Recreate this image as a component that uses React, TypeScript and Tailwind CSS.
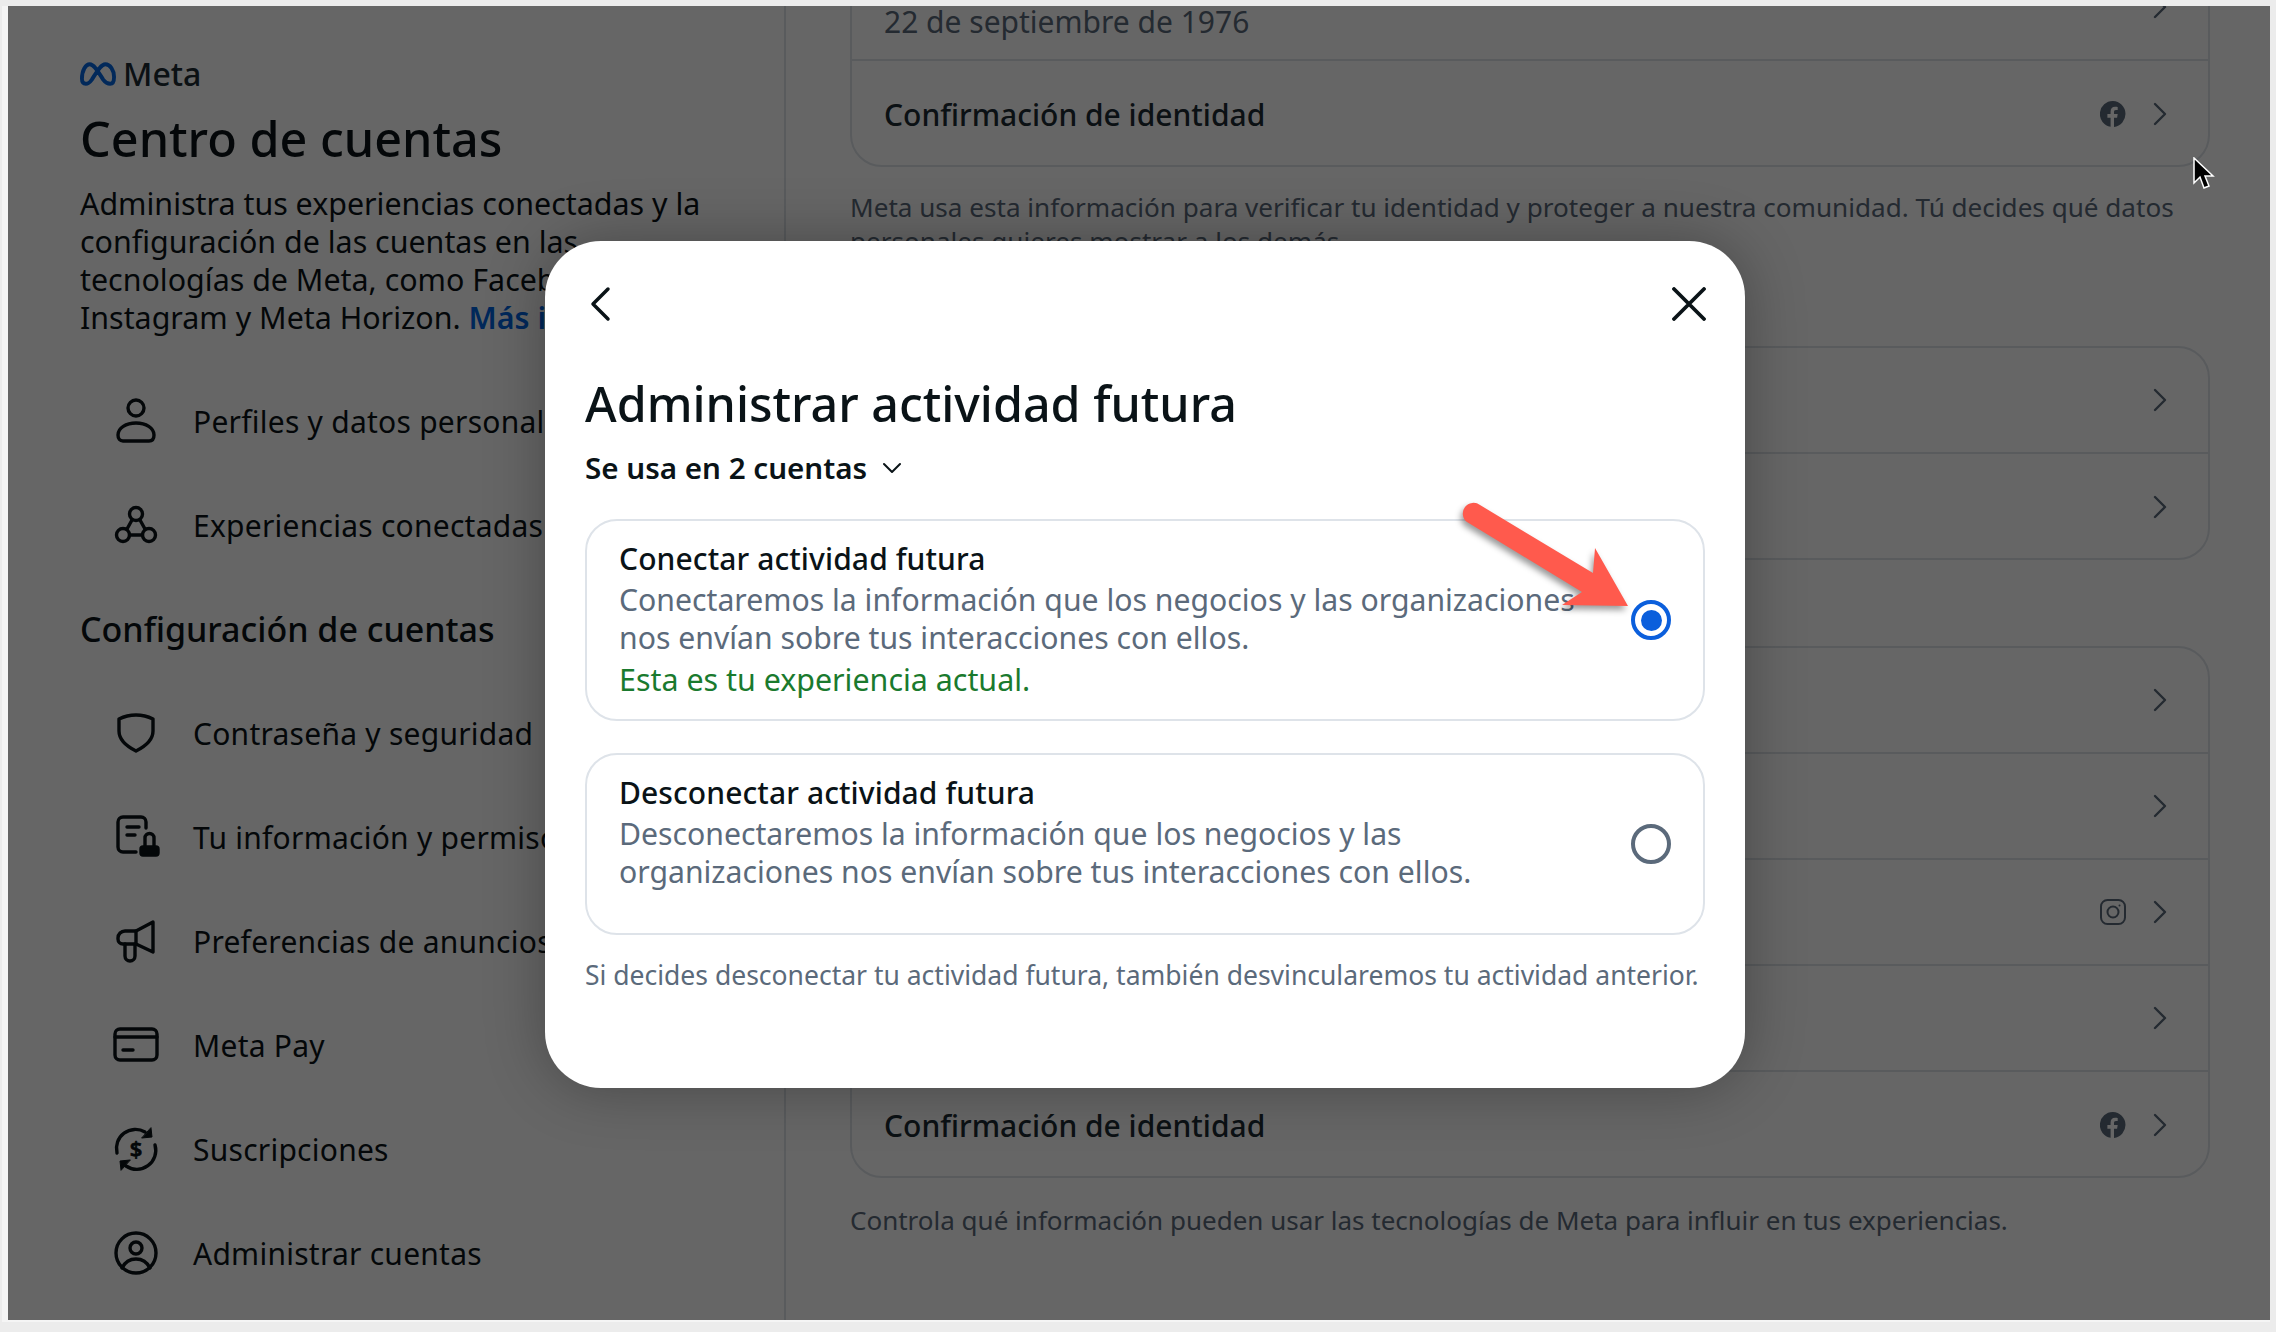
import { ReactNode } from 'react';

const ink = 'fill-none stroke-[#0a1317] stroke-[3.4] [stroke-linecap:round] [stroke-linejoin:round]';

function Icon({ children }: { children: ReactNode }) {
  return (
    <svg viewBox="0 0 40 40" className={`w-10 h-10 shrink-0 overflow-visible ${ink}`}>
      {children}
    </svg>
  );
}

function NavItem({ icon, label }: { icon: ReactNode; label: string }) {
  return (
    <div className="h-[104px] flex items-center pl-9 gap-[37px] whitespace-nowrap">
      <Icon>{icon}</Icon>
      <span className="text-[30px] tracking-[0.25px] text-[#0a1317]">{label}</span>
    </div>
  );
}

function Chevron() {
  return (
    <svg viewBox="0 0 14 24" className="w-[14px] h-6 fill-none stroke-[#5b6a7b] stroke-[2.4] [stroke-linecap:round] [stroke-linejoin:round]">
      <path d="M2 2l10 10L2 22" />
    </svg>
  );
}

function FacebookGlyph() {
  return (
    <svg viewBox="0 0 26 26" className="w-[26px] h-[26px] fill-[#5b6a7b]">
      <path d="M13 0a13 13 0 0 0-2.400 25.800v-9.100H7.400V13h3.200v-2.300c0-3.300 1.600-5 4.500-5 1.200 0 2.200.1 2.600.2v3.200h-1.700c-1.600 0-2 .9-2 2.200V13h3.700l-.6 3.700h-3.100v9.200A13 13 0 0 0 13 0z" />
    </svg>
  );
}

function InstagramGlyph() {
  return (
    <svg viewBox="0 0 26 26" className="w-[26px] h-[26px] fill-none stroke-[#5b6a7b] stroke-2">
      <rect x="1" y="1" width="24" height="24" rx="6.500" />
      <circle cx="13" cy="13" r="5.500" />
      <circle cx="19.500" cy="6.500" r="1" className="fill-[#5b6a7b] stroke-0" />
    </svg>
  );
}

function Row({ label, sub, glyph, last }: { label?: string; sub?: string; glyph?: ReactNode; last?: boolean }) {
  return (
    <div className={`flex items-center justify-between pl-[32px] pr-[41px] ${last ? 'h-[104px] pt-[2px]' : 'h-[106px] border-b-2 border-[#dee3e9]'}`}>
      <div className="text-[30px]">
        {label && <span className="font-medium text-[#1c2b33]">{label}</span>}
        {sub && <span className="block translate-y-[14px] text-[#5b6a7b]">{sub}</span>}
      </div>
      <div className="flex items-center gap-[27px]">
        {glyph}
        <Chevron />
      </div>
    </div>
  );
}

function OptionCard({ title, lines, note, selected }: { title: string; lines: string[]; note?: string; selected?: boolean }) {
  return (
    <div className={`rounded-[32px] border-2 border-[#dee3e9] pl-[32px] pr-[32px] pt-[16px] flex items-center justify-between ${note ? 'h-[202px]' : 'h-[182px]'}`}>
      <div className="self-start">
        <div className="text-[30px] leading-[44px] font-medium text-[#0a1317] tracking-[0.1px]">{title}</div>
        {lines.map((line) => (
          <div key={line} className="text-[30.2px] leading-[38px] text-[#5b6a7b] whitespace-nowrap">{line}</div>
        ))}
        {note && <div className="text-[30.4px] leading-[46px] text-[#1a7a2e]">{note}</div>}
      </div>
      <div className={`w-10 h-10 rounded-full -mt-[16px] flex items-center justify-center border-[4px] ${selected ? 'border-[#0b5fdc]' : 'border-[#5b6a7b]'}`}>
        {selected && <div className="w-[21px] h-[21px] rounded-full bg-[#0b5fdc]" />}
      </div>
    </div>
  );
}

export default function App() {
  return (
    <div className="h-screen bg-[#ececec] pt-[6px] pl-[2px] pr-[6px] font-['Noto_Sans',sans-serif] overflow-hidden">
      <div className="relative h-[1316px] overflow-hidden bg-white flex border-l-[6px] border-b-2 border-[#f5f5f5]">
        {/* sidebar */}
        <aside className="w-[778px] shrink-0 border-r-2 border-[#dee3e9] pl-[72px] pt-[50px]">
          <div className="flex items-center gap-[7px] h-[36px]">
            <svg viewBox="0 0 37 24" className="w-[36px] h-[24px] fill-none stroke-[#0668e1] stroke-[4]">
              <path d="M2 17C2 8 6 2 10 2c5 0 10 10 14 16 3 4 5 4 7 4 3 0 4-3 4-7 0-7-4-13-9-13-5 0-10 10-14 16-3 4-4 4-6 4-3 0-4-2-4-5z" />
            </svg>
            <span className="text-[32px] font-medium text-[#1c2b33] leading-none">Meta</span>
          </div>
          <h1 className="mt-[14px] text-[48.5px] leading-[64px] font-medium text-[#0a1317] whitespace-nowrap">Centro de cuentas</h1>
          <p className="mt-[15px] text-[30.4px] leading-[38px] text-[#0a1317] whitespace-nowrap">
            Administra tus experiencias conectadas y la
            <br />
            configuración de las cuentas en las
            <br />
            tecnologías de Meta, como Facebook,
            <br />
            Instagram y Meta Horizon. <span className="font-semibold text-[#0064e0]">Más información</span>
          </p>
          <div className="mt-[32px]">
            <NavItem
              label="Perfiles y datos personales"
              icon={
                <>
                  <circle cx="20" cy="7" r="8" />
                  <path d="M2 34c0-7 8-12 18-12s18 5 18 12c0 4-2 6-5 6H7c-3 0-5-2-5-6z" />
                </>
              }
            />
            <NavItem
              label="Experiencias conectadas"
              icon={
                <>
                  <circle cx="20" cy="9" r="6.500" />
                  <circle cx="7" cy="30" r="6.500" />
                  <circle cx="33" cy="30" r="6.500" />
                  <path d="M16 15l-5 9M24 15l5 9M13.500 30h13" />
                </>
              }
            />
          </div>
          <h2 className="mt-[26px] h-[52px] flex items-center text-[34px] font-medium text-[#0a1317] whitespace-nowrap">Configuración de cuentas</h2>
          <div className="mt-[26px]">
            <NavItem
              label="Contraseña y seguridad"
              icon={<path d="M3 6c5-2.500 11-4 17-4s12 1.500 17 4v12c0 9-7 15-17 20C10 33 3 27 3 18z" />}
            />
            <NavItem
              label="Tu información y permisos"
              icon={
                <>
                  <path d="M20 35H7a5 5 0 0 1-5-5V5a5 5 0 0 1 5-5h18a5 5 0 0 1 5 5v6M11 10h12M11 18h8" />
                  <path d="M29 30v-9a4.500 4.500 0 0 1 9 0v9" />
                  <rect x="25" y="30" width="17" height="8" rx="2" className="fill-[#0a1317]" />
                </>
              }
            />
            <NavItem
              label="Preferencias de anuncios"
              icon={
                <>
                  <path d="M37 1L20 10H9a7 7 0 0 0-7 7v1c0 3 2 5 5 5h13l17 8z" />
                  <path d="M20 10v13M9 23v12a5 5 0 0 0 10 0V23" />
                </>
              }
            />
            <NavItem
              label="Meta Pay"
              icon={
                <>
                  <rect x="-1" y="4" width="42" height="31" rx="5" />
                  <path d="M-1 12h42M7 25h10" />
                </>
              }
            />
            <NavItem
              label="Suscripciones"
              icon={
                <>
                  <path d="M1 24A19 19 0 0 1 29 3M39 16a19 19 0 0 1-29 21" />
                  <path d="M26 9l10-1-1-9zM14 31L4 32l1 9z" className="fill-[#0a1317] stroke-[1]" />
                  <text x="20" y="28" textAnchor="middle" className="fill-[#0a1317] stroke-[0.6] text-[22px] font-semibold">$</text>
                </>
              }
            />
            <NavItem
              label="Administrar cuentas"
              icon={
                <>
                  <circle cx="20" cy="20" r="20" />
                  <circle cx="20" cy="15" r="6" />
                  <path d="M6 35c3-6 8-9 14-9s11 3 14 9" />
                </>
              }
            />
          </div>
        </aside>

        {/* main column, scrolled */}
        <main className="flex-1 pl-[64px] pr-[60px] -mt-[53px]">
          <div className="rounded-[32px] border-2 border-[#dee3e9]">
            <Row sub="22 de septiembre de 1976" />
            <Row label="Confirmación de identidad" glyph={<FacebookGlyph />} last />
          </div>
          <p className="mt-[23px] h-[68px] text-[26.1px] leading-[34px] text-[#5b6a7b] whitespace-nowrap">
            Meta usa esta información para verificar tu identidad y proteger a nuestra comunidad. Tú decides qué datos
            <br />
            personales quieres mostrar a los demás.
          </p>
          <div className="mt-[88px] rounded-[32px] border-2 border-[#dee3e9]">
            <Row />
            <Row last />
          </div>
          <div className="mt-[86px] rounded-[32px] border-2 border-[#dee3e9]">
            <Row />
            <Row />
            <Row glyph={<InstagramGlyph />} />
            <Row />
            <Row label="Confirmación de identidad" glyph={<FacebookGlyph />} last />
          </div>
          <p className="mt-[25px] text-[26px] leading-[34px] text-[#5b6a7b] whitespace-nowrap">
            Controla qué información pueden usar las tecnologías de Meta para influir en tus experiencias.
          </p>
        </main>

        {/* dim layer */}
        <div className="absolute inset-0 bg-black/60" />

        {/* modal */}
        <div className="absolute left-[537px] top-[235px] w-[1200px] h-[847px] rounded-[56px] bg-white px-[40px] pt-[41px] shadow-[0_0_60px_rgba(0,0,0,0.3)]">
          <div className="h-[44px] flex items-center justify-between pl-[3px] -mr-[1px]">
            <svg viewBox="0 0 24 36" className="w-6 h-9 fill-none stroke-[#0a1317] stroke-[3.500] [stroke-linecap:round] [stroke-linejoin:round]">
              <path d="M20 3L5 18l15 15" />
            </svg>
            <svg viewBox="0 0 34 34" className="w-[34px] h-[34px] fill-none stroke-[#0a1317] stroke-[3.800] [stroke-linecap:round]">
              <path d="M2 2l30 30M32 2L2 32" />
            </svg>
          </div>
          <h2 className="mt-[45px] text-[48.4px] leading-[64px] font-medium text-[#0a1317] whitespace-nowrap">Administrar actividad futura</h2>
          <div className="mt-[11px] h-[44px] flex items-center gap-[16px]">
            <span className="text-[29.6px] font-semibold text-[#0a1317]">Se usa en 2 cuentas</span>
            <svg viewBox="0 0 18 12" className="w-[18px] h-3 fill-none stroke-[#0a1317] stroke-2 [stroke-linecap:round] [stroke-linejoin:round]">
              <path d="M1 2l8 8 8-8" />
            </svg>
          </div>
          <div className="mt-[29px] flex flex-col gap-[32px]">
            <OptionCard
              selected
              title="Conectar actividad futura"
              lines={['Conectaremos la información que los negocios y las organizaciones', 'nos envían sobre tus interacciones con ellos.']}
              note="Esta es tu experiencia actual."
            />
            <OptionCard
              title="Desconectar actividad futura"
              lines={['Desconectaremos la información que los negocios y las', 'organizaciones nos envían sobre tus interacciones con ellos.']}
            />
          </div>
          <p className="mt-[22px] text-[26.5px] leading-[36px] text-[#5b6a7b] whitespace-nowrap">
            Si decides desconectar tu actividad futura, también desvincularemos tu actividad anterior.
          </p>

          {/* annotation arrow */}
          <svg viewBox="0 0 175 115" className="absolute left-[915px] top-[259px] w-[175px] h-[115px] overflow-visible fill-[#ff5a4d] drop-shadow-[-2px_4px_3px_rgba(0,0,0,0.4)]">
            <path d="M20 5L133 73l2-25 33 58-66-1 20-13L7 22A10.500 10.500 0 0 1 20 5z" />
          </svg>
        </div>

        {/* mouse pointer */}
        <svg viewBox="0 0 22 34" className="absolute left-[2185px] top-[151px] w-[22px] h-[34px] fill-black stroke-white stroke-[1.500]">
          <path d="M1 1v25l6-6 4 11 5-2-4-10h8z" />
        </svg>
      </div>
    </div>
  );
}
